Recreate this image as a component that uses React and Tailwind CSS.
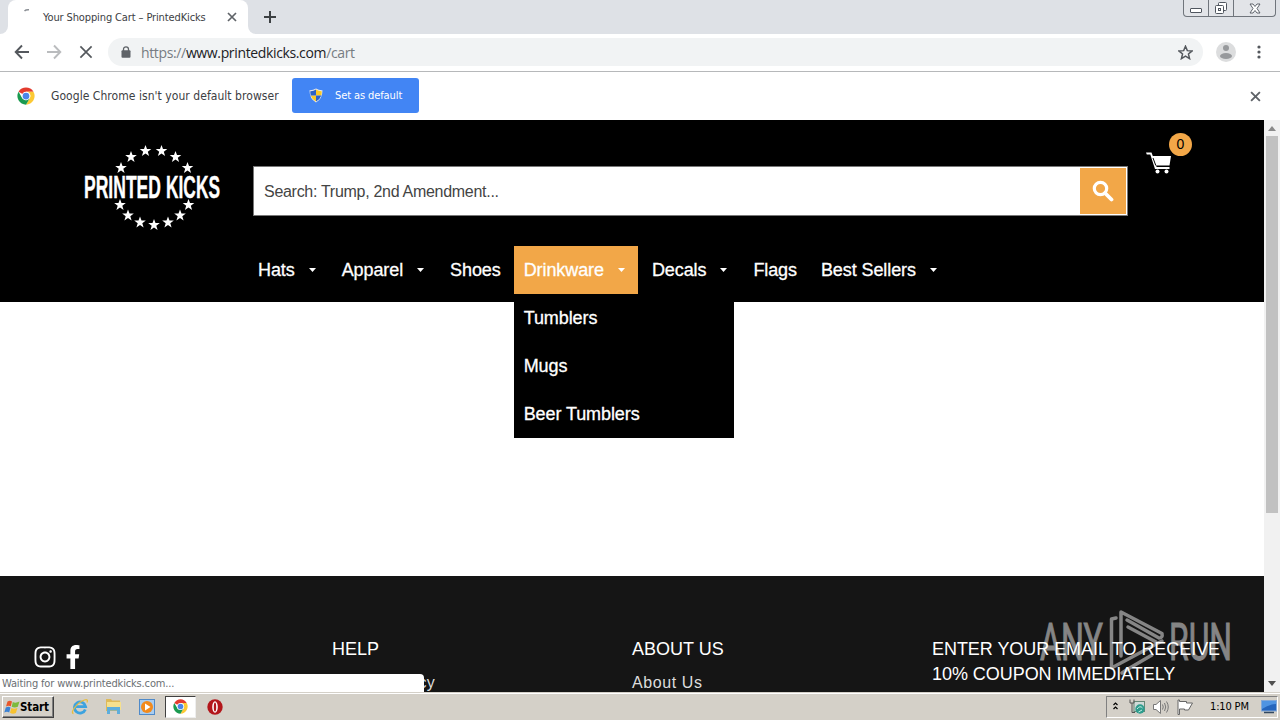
import { FaInstagram, FaFacebookF } from 'react-icons/fa';

const ui = "font-['DejaVu_Sans_Condensed','DejaVu_Sans',sans-serif]";
const uiLight = "font-['Open_Sans','Noto_Sans',sans-serif]";

const STAR = 'M0,-6 L1.5,-1.9 L5.8,-1.9 L2.3,0.8 L3.6,5 L0,2.4 L-3.6,5 L-2.3,0.8 L-5.8,-1.9 L-1.5,-1.9 Z';

const stars = [
  [121, 168], [131, 157], [145.5, 151], [161.5, 151], [175.5, 157], [187.5, 168],
  [120, 205], [128, 215.5], [140, 222.5], [154, 225], [168, 222.5], [180, 215.5], [188.5, 205],
];

const navItems = [
  { label: 'Hats', caret: true },
  { label: 'Apparel', caret: true },
  { label: 'Shoes' },
  { label: 'Drinkware', caret: true, items: ['Tumblers', 'Mugs', 'Beer Tumblers'] },
  { label: 'Decals', caret: true },
  { label: 'Flags' },
  { label: 'Best Sellers', caret: true },
];

function ChromeLogo({ className }) {
  return (
    <svg viewBox="0 0 48 48" className={className}>
      <path d="M24 24 L4.1 12.5 A23 23 0 0 1 43.9 12.5 L24 12.5 Z" fill="#e33b2e" />
      <path d="M43.9 12.5 A23 23 0 0 1 24 47 L34 29.8 A11.5 11.5 0 0 0 24 12.5 Z" fill="#fcc934" />
      <path d="M4.1 12.5 A23 23 0 0 0 24 47 L34 29.8 L24 35 L14 29.8 Z" fill="#1a9a50" />
      <circle cx="24" cy="24" r="11.5" fill="#fff" />
      <circle cx="24" cy="24" r="9" fill="#4a86e8" />
    </svg>
  );
}

function CloseIcon({ className }) {
  return (
    <svg viewBox="0 0 10 10" className={className} fill="none" stroke="currentColor">
      <path d="M1 1 L9 9 M9 1 L1 9" />
    </svg>
  );
}

function TabStrip() {
  return (
    <div className="h-[34px] bg-[#dee1e6] flex items-start">
      <div className="w-2 h-[34px] bg-white">
        <div className="h-full bg-[#dee1e6] rounded-br-lg"></div>
      </div>
      <div className="w-60 h-[34px] bg-white rounded-t-lg flex items-center">
        <svg className="w-4 h-4 ml-3 -mt-1 shrink-0" viewBox="0 0 16 16" fill="none" stroke="#8b8f95" strokeWidth="1.5">
          <path d="M4.5 4 Q6 2.5 9 2.8" />
        </svg>
        <span className={`${ui} ml-[7px] mt-[2px] w-[166px] text-[11px] tracking-[-0.12px] text-[#3c4043] whitespace-nowrap`}>
          Your Shopping Cart – PrintedKicks
        </span>
        <CloseIcon className="w-[10px] h-[10px] ml-[18px] text-[#5f6368] stroke-[1.7]" />
      </div>
      <div className="w-2 h-[34px] bg-white">
        <div className="h-full bg-[#dee1e6] rounded-bl-lg"></div>
      </div>
      <svg className="w-3 h-3 ml-2 mt-[11px]" viewBox="0 0 12 12" stroke="#3c4043" strokeWidth="2">
        <path d="M6 0 V12 M0 6 H12" />
      </svg>
      <div className="ml-auto mr-[4px] h-[17px] w-[93px] border border-t-0 border-[#70757c] rounded-b-[4px] flex bg-[#e2e4e8]">
        <div className="w-[25px] border-r border-[#70757c] flex items-end justify-center pb-[3px]">
          <div className="w-3 h-[5px] border border-[#50565f] bg-white rounded-[1px]"></div>
        </div>
        <div className="w-[25px] border-r border-[#70757c] flex items-center justify-center">
          <svg className="w-[14px] h-[14px]" viewBox="0 0 14 14" fill="#fff" stroke="#50565f">
            <rect x="4.5" y="1.5" width="8" height="8" rx="1" />
            <rect x="1.5" y="4.5" width="8" height="8" rx="1" />
            <rect x="4.5" y="7.5" width="2" height="2" />
          </svg>
        </div>
        <div className="flex-1 flex items-center justify-center">
          <svg className="w-3 h-[11px]" viewBox="0 0 12 11" fill="#fff" stroke="#50565f" strokeWidth="0.9">
            <path d="M1 1 H4 L6 3.5 L8 1 H11 L8 5.5 L11 10 H8 L6 7.5 L4 10 H1 L4 5.5 Z" />
          </svg>
        </div>
      </div>
    </div>
  );
}

function Toolbar() {
  return (
    <div className="h-[38px] pb-px bg-white border-b border-[#b6b8ba] flex items-center">
      <svg className="w-4 h-4 ml-[14px]" viewBox="0 0 16 16" fill="none" stroke="#54585d" strokeWidth="1.9">
        <path d="M15 8 H2 M8 1.5 L1.7 8 L8 14.5" />
      </svg>
      <svg className="w-4 h-4 ml-4" viewBox="0 0 16 16" fill="none" stroke="#babcbe" strokeWidth="1.9">
        <path d="M1 8 H14 M8 1.5 L14.3 8 L8 14.5" />
      </svg>
      <CloseIcon className="w-[14px] h-[14px] ml-[17px] text-[#54585d] stroke-[1.2]" />
      <div className="ml-[15px] w-[1095px] h-7 rounded-full bg-[#f1f3f4] flex items-center">
        <svg className="w-[10px] h-3 ml-[13px]" viewBox="0 0 10 12">
          <rect x="0.5" y="4.3" width="9" height="7.5" rx="1" fill="#5f6368" />
          <path d="M2.5 5 V3.3 A2.5 2.5 0 0 1 7.5 3.3 V5" fill="none" stroke="#5f6368" strokeWidth="1.3" />
        </svg>
        <span className={`${uiLight} ml-[10px] text-[14px] tracking-[-0.36px] text-[#777c82] whitespace-nowrap`}>
          https://<span className="text-[#202124]">www.printedkicks.com</span>/cart
        </span>
        <svg className="w-[15px] h-[15px] ml-auto mr-[10px]" viewBox="0 0 24 24" fill="none" stroke="#54585d" strokeWidth="2.4">
          <path d="M12 2 L14.9 9 L22.5 9.5 L16.7 14.4 L18.5 21.8 L12 17.8 L5.5 21.8 L7.3 14.4 L1.5 9.5 L9.1 9 Z" />
        </svg>
      </div>
      <svg className="w-5 h-5 ml-[13px]" viewBox="0 0 20 20">
        <circle cx="10" cy="10" r="10" fill="#dcddde" />
        <circle cx="10" cy="6" r="3" fill="#97999c" />
        <ellipse cx="10" cy="14" rx="6" ry="3" fill="#97999c" />
      </svg>
      <svg className="w-1 h-[14px] ml-[21px]" viewBox="0 0 4 14" fill="#54585d">
        <circle cx="2" cy="2" r="1.6" />
        <circle cx="2" cy="7" r="1.6" />
        <circle cx="2" cy="12" r="1.6" />
      </svg>
    </div>
  );
}

function InfoBar() {
  return (
    <div className="h-12 bg-white flex items-center">
      <ChromeLogo className="w-[18px] h-[18px] ml-[17px]" />
      <span className={`${ui} ml-4 w-[229px] text-[12px] tracking-[0.05px] text-[#3c4043] whitespace-nowrap`}>
        Google Chrome isn't your default browser
      </span>
      <button className="ml-3 mb-[2px] w-[127px] h-[35px] rounded-[3px] bg-[#4285f4] flex items-center">
        <svg className="w-[14px] h-[15px] ml-[17px]" viewBox="0 0 14 15">
          <path d="M7 0.5 Q10 2.5 13.5 2.3 Q13.5 11 7 14.5 Q0.5 11 0.5 2.3 Q4 2.5 7 0.5Z" fill="#e8eaec" />
          <path d="M7 1.5 V7.5 H12.3 Q12.8 5.5 12.7 3.2 Q9.5 3.3 7 1.5Z M7 7.5 H1.7 Q3 11.5 7 13.6Z" fill="#fbc926" />
          <path d="M7 1.5 Q4.5 3.3 1.3 3.2 Q1.2 5.5 1.7 7.5 H7Z M7 7.5 V13.6 Q11 11.5 12.3 7.5Z" fill="#2c62c8" />
        </svg>
        <span className={`${ui} ml-3 mt-[2px] text-[11px] tracking-[-0.1px] text-white whitespace-nowrap`}>Set as default</span>
      </button>
      <CloseIcon className="w-[11px] h-[11px] ml-auto mr-[19px] text-[#5f6368] stroke-[1.7]" />
    </div>
  );
}

function Logo() {
  return (
    <svg className="w-[140px] h-[90px] overflow-visible" viewBox="82 143 140 90" fill="#fff">
      {stars.map(([x, y]) => (
        <path key={`${x}-${y}`} d={STAR} transform={`translate(${x} ${y})`} />
      ))}
      <g fontFamily="Liberation Sans Narrow, Liberation Sans, sans-serif" fontWeight="700" fontSize="31" stroke="#fff" strokeWidth="0.4">
        <text x="84" y="197.5" textLength="77" lengthAdjust="spacingAndGlyphs">PRINTED</text>
        <text x="166" y="197.5" textLength="54" lengthAdjust="spacingAndGlyphs">KICKS</text>
      </g>
    </svg>
  );
}

function NavItem({ item }) {
  return (
    <div className={`relative h-12 pl-[10px] flex items-center ${item.items ? 'bg-[#f2a748] -ml-px pr-[11px]' : 'pr-[10px]'}`}>
      <span>{item.label}</span>
      {item.caret && (
        <svg className="w-[7px] h-1 ml-[14px] mr-[2px]" viewBox="0 0 7 4" fill="#fff">
          <path d="M0 0 H7 L3.5 4 Z" />
        </svg>
      )}
      {item.items && (
        <div className="absolute left-0 top-12 w-[220px] bg-black z-10">
          {item.items.map((label) => (
            <div key={label} className="h-12 px-[10px] flex items-center">{label}</div>
          ))}
        </div>
      )}
    </div>
  );
}

function Header() {
  return (
    <header className="h-[182px] bg-black flex">
      <div className="ml-[82px] mt-[23px] w-[140px] shrink-0">
        <Logo />
      </div>
      <div className="ml-[26px] w-[879px] shrink-0">
        <div className="ml-[5px] mt-[46px] h-[50px] w-[875px] bg-white border border-[#777] flex">
          <span className="ml-[10px] mt-px flex-1 self-center text-[16px] tracking-[-0.29px] text-[#444] whitespace-nowrap">
            Search: Trump, 2nd Amendment...
          </span>
          <button className="w-[46px] my-px mr-px bg-[#f2a748] flex items-center justify-center">
            <svg className="w-[22px] h-[22px]" viewBox="0 0 22 22" fill="none" stroke="#fff">
              <circle cx="8.5" cy="8.5" r="6.2" strokeWidth="3.2" />
              <path d="M13 13 L19.5 19.5" strokeWidth="3.8" strokeLinecap="round" />
            </svg>
          </button>
        </div>
        <nav className="mt-[30px] flex gap-[4px] text-[18px] tracking-[-0.09px] text-white whitespace-nowrap [-webkit-text-stroke:0.3px_white]">
          {navItems.map((item) => (
            <NavItem key={item.label} item={item} />
          ))}
        </nav>
      </div>
      <div className="relative ml-[19px] mt-[32px] w-[28px] h-[24px]">
        <svg className="w-[26px] h-[22px]" viewBox="0 0 26 22" fill="#fff">
          <path d="M0 0.5 H5.5 L6.8 4 H25 L23.5 13.5 H10 L10.6 15 H23.5 V17 H9 L4.3 2.5 H0.8 Z" />
          <path d="M7 6 L9.8 13.5" stroke="#000" strokeWidth="1" />
          <circle cx="11.5" cy="19.5" r="2" />
          <circle cx="20.5" cy="19.5" r="2" />
        </svg>
        <span className="absolute left-[23px] -top-[19px] w-[23px] h-[23px] rounded-full bg-[#f2a748] text-black text-[14px] flex items-center justify-center">
          0
        </span>
      </div>
    </header>
  );
}

function Watermark() {
  return (
    <svg className="absolute left-[1034px] top-[30px] w-[204px] h-[72px] overflow-visible" viewBox="1034 606 204 72" fill="#858585">
      <g fontFamily="Roboto, sans-serif" fontSize="52" stroke="#858585" strokeWidth="1.1">
        <text x="1040" y="659.5" textLength="63" lengthAdjust="spacingAndGlyphs">ANY</text>
        <text x="1169" y="659.5" textLength="63" lengthAdjust="spacingAndGlyphs">RUN</text>
      </g>
      <g fill="none" stroke="#858585" strokeWidth="3.5" strokeLinejoin="round" strokeLinecap="round">
        <path d="M1116 618 L1111.5 619 V668 L1162 641" />
        <path d="M1121 656 V612 L1162 633.5 Q1163 638 1159 638 L1127 620" />
        <path d="M1128 627 L1156 642 M1122 673 L1128 669 L1152 655" />
      </g>
    </svg>
  );
}

function Footer() {
  return (
    <footer className="relative h-[116px] bg-[#151515] text-white flex overflow-hidden">
      <Watermark />
      <div className="w-[332px] shrink-0 pl-[33px] pt-[69px] flex gap-[6px]">
        <FaInstagram size={24} />
        <FaFacebookF size={24} className="ml-[-2px]" />
      </div>
      <div className="relative w-[300px] shrink-0 pt-[61px]">
        <h3 className="text-[18px] leading-[25px]">HELP</h3>
        <p className="mt-[9px] text-[16px] leading-6 tracking-[0.25px] text-[#ddd]">Privacy Policy</p>
      </div>
      <div className="relative w-[300px] shrink-0 pt-[61px]">
        <h3 className="text-[18px] leading-[25px]">ABOUT US</h3>
        <p className="mt-[9px] text-[16px] leading-6 tracking-[0.6px] text-[#ddd]">About Us</p>
      </div>
      <div className="relative w-[320px] shrink-0 pt-[61px]">
        <h3 className="text-[18px] leading-[25px] tracking-[-0.05px] whitespace-nowrap">
          ENTER YOUR EMAIL TO RECEIVE
          <br />
          10% COUPON IMMEDIATELY
        </h3>
      </div>
      <div className={`${ui} absolute left-0 bottom-0 w-[424px] h-[18px] rounded-tr-[4px] bg-white pl-[2px] text-[11px] leading-[19px] tracking-[-0.15px] text-[#6b6f73]`}>
        Waiting for www.printedkicks.com...
      </div>
    </footer>
  );
}

function Scrollbar() {
  return (
    <div className="w-4 bg-[#f1f1f1] flex flex-col items-center justify-between py-[6px]">
      <svg className="w-2 h-[5px]" viewBox="0 0 8 5" fill="#8a8a8a"><path d="M0 5 L4 0 L8 5Z" /></svg>
      <div className="w-3 h-[377px] mt-[5px] mb-auto bg-[#c1c1c1]"></div>
      <svg className="w-2 h-[5px]" viewBox="0 0 8 5" fill="#505050"><path d="M0 0 L4 5 L8 0Z" /></svg>
    </div>
  );
}

function Taskbar() {
  return (
    <div className="h-7 bg-[#d4d0c8] border-t border-[#d4d0c8] flex items-center shadow-[inset_0_1px_0_#fff]">
      <button className={`${ui} ml-[2px] w-[52px] h-[22px] flex items-center bg-[#d4d0c8] border border-l-white border-t-white border-r-[#404040] border-b-[#404040] shadow-[inset_-1px_-1px_0_#808080] text-[11.5px] font-bold text-black tracking-[-0.1px]`}>
        <svg className="w-4 h-4 ml-px shrink-0" viewBox="0 0 16 16">
          <path d="M3.5 2.5 Q6 1 8 2.5 L6.8 7.3 Q4.5 6 2 7.5Z" fill="#e8572a" />
          <path d="M8.8 3 Q11.5 4.5 15.5 2.5 L13.8 7.8 Q10.5 9.3 7.7 7.7Z" fill="#7dba3c" />
          <path d="M1.8 8.5 Q4.5 7.2 6.5 8.5 L5.2 13.5 Q3 12 0.3 13.5Z" fill="#3b82d4" />
          <path d="M7.4 9 Q10 10.3 13.4 8.9 L11.9 14 Q8.8 15.5 6 13.8Z" fill="#f7c22f" />
        </svg>
        <span className="mt-[2px]">Start</span>
      </button>
      {/* Quick launch */}
      <svg className="w-[18px] h-[18px] ml-[17px]" viewBox="0 0 18 18" fill="none">
        <path d="M14.3 11.5 A5.6 5.6 0 1 1 14.6 8.6 H5" stroke="#3da3df" strokeWidth="2.8" />
        <path d="M2.5 15.5 Q0 15 3 10.5 Q7.5 4 13.5 2 Q17.5 0.8 16 4.5" stroke="#e8bd3d" strokeWidth="1.3" />
      </svg>
      <svg className="w-[18px] h-[17px] ml-[15px]" viewBox="0 0 18 17">
        <path d="M2 1 H7 L8 2.5 H16 V13 H2Z" fill="#dfba58" />
        <path d="M3 4 H17 V12 H3Z" fill="#f5e08e" />
        <path d="M3 9 H16 V16 H13 V12.5 H6 V16 H3Z" fill="#5eaedc" />
      </svg>
      <svg className="w-4 h-4 ml-[17px]" viewBox="0 0 16 16">
        <rect x="0.5" y="0.5" width="15" height="15" fill="#a9cdf0" stroke="#4f8ac9" />
        <circle cx="8" cy="8" r="6" fill="#f28a1c" />
        <path d="M6 4.5 L11.5 8 L6 11.5Z" fill="#fff" />
      </svg>
      <div className="ml-[10px] w-[31px] h-[22px] bg-white border border-l-[#404040] border-t-[#404040] border-r-[#eee] border-b-[#eee] flex items-center justify-center">
        <ChromeLogo className="w-[15px] h-[15px]" />
      </div>
      <svg className="w-4 h-4 ml-[11px]" viewBox="0 0 16 16">
        <circle cx="8" cy="8" r="7.7" fill="#b3161b" />
        <ellipse cx="8" cy="8" rx="2.8" ry="5.8" fill="#fff" />
        <ellipse cx="8" cy="8" rx="1.2" ry="4.6" fill="#b3161b" />
      </svg>
      {/* Tray */}
      <div className="ml-auto mr-[2px] w-[172px] h-[22px] border border-l-[#808080] border-t-[#808080] border-r-white border-b-white flex items-center">
        <svg className="w-[5px] h-[8px] ml-[6px] mb-[2px] shrink-0" viewBox="0 0 5 8" fill="none" stroke="#000" strokeWidth="1.2">
          <path d="M0.5 3 L2.5 1 L4.5 3 M0.5 7 L2.5 5 L4.5 7" />
        </svg>
        <svg className="w-4 h-4 ml-[11px] shrink-0" viewBox="0 0 16 16">
          <rect x="5" y="2.5" width="10.5" height="10" fill="#cfdad8" stroke="#687" />
          <circle cx="11" cy="10" r="4.7" fill="#2e9c8d" />
          <path d="M8 10 Q11 6 13.5 9 M9.5 13 L13 11" stroke="#c6efe5" fill="none" />
          <path d="M1 0.5 V4 H5 V0.5 M3 4 V13.5 H6" fill="none" stroke="#555" />
        </svg>
        <svg className="w-4 h-4 ml-2 shrink-0" viewBox="0 0 16 16" fill="none" stroke="#777">
          <path d="M0.5 5.5 H3 L7.5 1.5 V14.5 L3 10.5 H0.5Z" fill="#fff" />
          <path d="M9.5 5.5 Q11 8 9.5 10.5 M11.5 4 Q14 8 11.5 12 M13.5 2.5 Q17 8 13.5 13.5" />
        </svg>
        <svg className="w-4 h-4 ml-2 shrink-0" viewBox="0 0 16 16" fill="#fff" stroke="#666">
          <path d="M1 1 V15.5 H2.5 V10 H7.5 V11 H11.5 L15.5 4 H9.5 V2.5 H2.5 V1Z" />
        </svg>
        <span className={`${ui} ml-[17px] mt-[2px] w-[39px] text-[11px] tracking-[-0.15px] text-black whitespace-nowrap`}>1:10 PM</span>
        <svg className="w-4 h-[14px] ml-3 shrink-0" viewBox="0 0 16 14">
          <rect x="0.5" y="0.5" width="15" height="10.5" fill="#2465bd" stroke="#84a9d7" />
          <path d="M1 1 H15 V4 Q8 4 1 9Z" fill="#4f94e2" />
          <path d="M3 12.5 H13" stroke="#324861" strokeWidth="1.5" />
        </svg>
      </div>
    </div>
  );
}

export default function App() {
  return (
    <div className="w-[1280px] h-[720px] overflow-hidden bg-white flex flex-col font-['Liberation_Sans',Arial,sans-serif]">
      <TabStrip />
      <Toolbar />
      <InfoBar />
      <div className="h-[572px] flex">
        <main className="w-[1264px]">
          <Header />
          <div className="h-[274px] bg-white"></div>
          <Footer />
        </main>
        <Scrollbar />
      </div>
      <Taskbar />
    </div>
  );
}
